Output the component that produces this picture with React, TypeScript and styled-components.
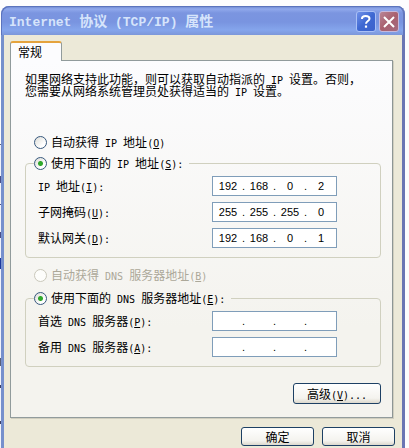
import React, { Fragment, ReactNode, useState } from 'react';
import styled, { createGlobalStyle } from 'styled-components';

const GlobalStyle = createGlobalStyle`
  * { box-sizing: border-box; }
  body {
    margin: 0;
    background: #fdfdfe;
    color: #000;
    font: 12px/14px 'Noto Sans CJK SC', sans-serif;
  }
`;

const Desktop = styled.div`
  min-height: 100vh;
  display: flex;
  padding: 6px 4px 0 1px;
  background:
    linear-gradient(
      #fdfdfe 144px, #5a6078 144px, #5a6078 145px, #f0f2fa 145px, #f0f2fa 176px,
      #4a4f88 176px, #4a4f88 183px, #f0f2fa 183px, #f0f2fa 204px, #4a4f88 204px,
      #4a4f88 205px, #f0f2fa 205px, #f0f2fa 232px, #4a4f88 232px, #4a4f88 238px,
      #f0f2fa 238px, #f0f2fa 258px, #1d3a9c 258px, #1d3a9c 269px, #f0f2fa 269px,
      #f0f2fa 358px, #5a6078 358px, #5a6078 366px, #f0f2fa 366px, #f0f2fa 385px,
      #3c3f66 385px, #3c3f66 388px, #f0f2fa 388px, #f0f2fa 421px, #3c3f66 421px,
      #3c3f66 424px, #f0f2fa 424px
    ) left top / 1px 448px no-repeat,
    #fdfdfe;
`;

const Dialog = styled.div`
  flex: 1;
  min-width: 0;
  display: flex;
  flex-direction: column;
`;

const TitleBar = styled.header`
  display: flex;
  align-items: center;
  gap: 3px;
  height: 29px;
  padding: 2px 6px 0 8px;
  border-radius: 8px 8px 0 0;
  box-shadow: inset 1px 1px 0 #5c74bd, inset -2px 0 0 #6377bc;
  background: linear-gradient(#6681ca 0, #91a9ec 3px, #7b95e0 7px, #7994e0 16px, #85a5ec 24px, #7c97da 100%);
`;

const Title = styled.h1`
  flex: 1;
  margin: 0;
  color: #d6e4fb;
  font-size: 14px;
  line-height: 18px;
  font-weight: 700;
  white-space: pre;
`;

const TitleLatin = styled.span`
  font-family: 'Liberation Mono', monospace;
  font-size: 13px;
`;

const CaptionButton = styled.button<{ $close?: boolean }>`
  display: grid;
  place-items: center;
  width: 20px;
  height: 21px;
  padding: 0;
  border: 1px solid ${(p) => (p.$close ? '#c6b9dc' : '#a9c0f6')};
  border-radius: 3px;
  background: ${(p) =>
    p.$close
      ? 'linear-gradient(135deg, #b98595, #a9606f 50%, #a46b80)'
      : 'linear-gradient(135deg, #6f90e8, #3e68d2 50%, #3c62cc)'};
`;

const Body = styled.main`
  flex: 1;
  padding: 6px 9px 2px 6px;
  border: solid;
  border-width: 0 3px;
  border-color: #7d93cf #6a76b4 #7d93cf #7690cc;
  background: #ece9d8;
`;

const Tab = styled.button`
  display: block;
  position: relative;
  width: 52px;
  height: 20px;
  margin-bottom: -1px;
  padding: 0 0 0 7px;
  border: 1px solid #919b9c;
  border-top: 2px solid #e5a33d;
  border-bottom: 0;
  border-radius: 3px 3px 0 0;
  background: #fcfcfe;
  color: inherit;
  font: inherit;
  text-align: left;
`;

const Panel = styled.section`
  padding: 12px 11px 13px 14px;
  border: 1px solid #919b9c;
  border-right-color: #8d9695;
  box-shadow: 1px 1px 0 #d0cebf;
  background: linear-gradient(#fcfcfe, #f4f3ee 75%);
`;

const Intro = styled.p`
  margin: 0 0 38px;
  line-height: 12px;
  white-space: pre-wrap;
`;

const Latin = styled.span`
  font-family: 'DejaVu Sans Mono', monospace;
  font-size: 10px;
  line-height: 0;
  white-space: pre;
`;

const Choice = styled.label<{ $disabled?: boolean }>`
  display: flex;
  align-items: center;
  gap: 4px;
  height: 14px;
  white-space: nowrap;
  color: ${(p) => (p.$disabled ? '#aca899' : 'inherit')};
`;

const StandaloneChoice = styled.div<{ $spaced?: boolean }>`
  margin: ${(p) => (p.$spaced ? '10px 0 9px 9px' : '0 0 7px 9px')};
`;

const Radio = styled.input`
  appearance: none;
  flex: none;
  width: 13px;
  height: 13px;
  margin: 0;
  border: 1px solid #37587d;
  border-radius: 50%;
  background: linear-gradient(135deg, #dcdcd7, #fff 70%);
  &:checked {
    background:
      radial-gradient(circle, #2fae2c 0, #2fa52b 2px, transparent 3px),
      linear-gradient(135deg, #dcdcd7, #fff 70%);
  }
  &:disabled {
    border-color: #cac8bb;
    background: #fdfdfb;
  }
`;

const Group = styled.fieldset`
  min-width: 0;
  margin: 0;
  padding: 0 12px 9px 8px;
  border: 1px solid #d0d0bf;
  border-radius: 4px;
`;

const Legend = styled.legend`
  padding: 0 6px 0 0;
`;

const Fields = styled.div`
  display: grid;
  row-gap: 6px;
  padding: 6px 0 0 4px;
`;

const FieldRow = styled.div`
  display: grid;
  grid-template-columns: 174px 125px;
  align-items: center;
`;

const AddressBox = styled.div`
  display: flex;
  align-items: center;
  height: 20px;
  padding-left: 1px;
  border: 1px solid #7f9db9;
  background: #fff;
  font: 11px/14px 'Liberation Sans', sans-serif;
`;

const Octet = styled.input`
  width: 28px;
  height: 16px;
  padding: 0;
  border: 0;
  outline: 0;
  background: transparent;
  color: inherit;
  font: inherit;
  text-align: center;
`;

const Dot = styled.span`
  width: 3px;
`;

const PushButton = styled.button<{ $wide?: boolean }>`
  width: ${(p) => (p.$wide ? 88 : 73)}px;
  height: ${(p) => (p.$wide ? 21 : 19)}px;
  padding: 0;
  border: 1px solid #1d4064;
  border-radius: 3px;
  background: linear-gradient(#fff, #f4f3ee 75%, #dcd8cd);
  color: inherit;
  font: inherit;
  line-height: 14px;
`;

const ButtonBar = styled.div<{ $footer?: boolean }>`
  display: flex;
  justify-content: flex-end;
  gap: 8px;
  margin: ${(p) => (p.$footer ? '9px -2px 0 0' : '16px 0 0')};
`;

function Mixed({ text, as: Part = Latin }: { text: string; as?: typeof Latin | typeof TitleLatin }) {
  return (
    <>
      {text.split(/([\x20-\x7e]+)/).map((run, i) => (i % 2 ? <Part key={i}>{run}</Part> : run))}
    </>
  );
}

function Caption({ text, accessKey, tail = '' }: { text: string; accessKey: string; tail?: string }) {
  return (
    <span>
      <Mixed text={text} />
      <Latin>
        (<u>{accessKey}</u>){tail}
      </Latin>
    </span>
  );
}

function RadioChoice(props: {
  name: string;
  checked: boolean;
  onSelect: () => void;
  disabled?: boolean;
  children: ReactNode;
}) {
  return (
    <Choice $disabled={props.disabled}>
      <Radio
        type="radio"
        name={props.name}
        checked={props.checked}
        disabled={props.disabled}
        onChange={props.onSelect}
      />
      {props.children}
    </Choice>
  );
}

function AddressRow({ id, text, accessKey, value }: { id: string; text: string; accessKey: string; value: string[] }) {
  return (
    <FieldRow>
      <label htmlFor={`${id}-0`}>
        <Caption text={text} accessKey={accessKey} tail=":" />
      </label>
      <AddressBox>
        {value.map((octet, i) => (
          <Fragment key={i}>
            {i > 0 && <Dot>.</Dot>}
            <Octet id={`${id}-${i}`} aria-label={`${text} ${i + 1}`} defaultValue={octet} maxLength={3} />
          </Fragment>
        ))}
      </AddressBox>
    </FieldRow>
  );
}

const EMPTY = ['', '', '', ''];

export default function App() {
  const [manualIp, setManualIp] = useState(true);

  return (
    <>
      <GlobalStyle />
      <Desktop>
        <Dialog role="dialog" aria-labelledby="title">
          <TitleBar>
            <Title id="title">
              <Mixed text="Internet 协议 (TCP/IP) 属性" as={TitleLatin} />
            </Title>
            <CaptionButton type="button" aria-label="帮助">
              <svg width="14" height="15" viewBox="0 0 14 15" fill="none" stroke="#fff" strokeWidth="2">
                <path d="M3 5V4.5C3 2.8 4.6 2 6.6 2S10.5 2.9 10.5 4.7C10.5 7 7 7 7 9.8" />
                <path d="M7 11.5V13.7" strokeWidth="2.2" />
              </svg>
            </CaptionButton>
            <CaptionButton type="button" aria-label="关闭" $close>
              <svg width="14" height="14" viewBox="0 0 14 14" stroke="#fff" strokeWidth="2">
                <path d="M2 2L12 12M12 2L2 12" />
              </svg>
            </CaptionButton>
          </TitleBar>
          <Body>
            <Tab type="button" role="tab" aria-selected="true">
              常规
            </Tab>
            <Panel>
              <Intro>
                <Mixed text="如果网络支持此功能，则可以获取自动指派的 IP 设置。否则，" />
                <br />
                <Mixed text="您需要从网络系统管理员处获得适当的 IP 设置。" />
              </Intro>

              <StandaloneChoice>
                <RadioChoice name="ip" checked={!manualIp} onSelect={() => setManualIp(false)}>
                  <Caption text="自动获得 IP 地址" accessKey="O" />
                </RadioChoice>
              </StandaloneChoice>
              <Group>
                <Legend>
                  <RadioChoice name="ip" checked={manualIp} onSelect={() => setManualIp(true)}>
                    <Caption text="使用下面的 IP 地址" accessKey="S" tail=":" />
                  </RadioChoice>
                </Legend>
                <Fields>
                  <AddressRow id="ip" text="IP 地址" accessKey="I" value={['192', '168', '0', '2']} />
                  <AddressRow id="mask" text="子网掩码" accessKey="U" value={['255', '255', '255', '0']} />
                  <AddressRow id="gateway" text="默认网关" accessKey="D" value={['192', '168', '0', '1']} />
                </Fields>
              </Group>

              <StandaloneChoice $spaced>
                <RadioChoice name="dns" checked={false} disabled onSelect={() => {}}>
                  <Caption text="自动获得 DNS 服务器地址" accessKey="B" />
                </RadioChoice>
              </StandaloneChoice>
              <Group>
                <Legend>
                  <RadioChoice name="dns" checked onSelect={() => {}}>
                    <Caption text="使用下面的 DNS 服务器地址" accessKey="E" tail=":" />
                  </RadioChoice>
                </Legend>
                <Fields>
                  <AddressRow id="dns1" text="首选 DNS 服务器" accessKey="P" value={EMPTY} />
                  <AddressRow id="dns2" text="备用 DNS 服务器" accessKey="A" value={EMPTY} />
                </Fields>
              </Group>

              <ButtonBar>
                <PushButton type="button" $wide>
                  <Caption text="高级" accessKey="V" tail="..." />
                </PushButton>
              </ButtonBar>
            </Panel>
            <ButtonBar $footer>
              <PushButton type="button">确定</PushButton>
              <PushButton type="button">取消</PushButton>
            </ButtonBar>
          </Body>
        </Dialog>
      </Desktop>
    </>
  );
}
